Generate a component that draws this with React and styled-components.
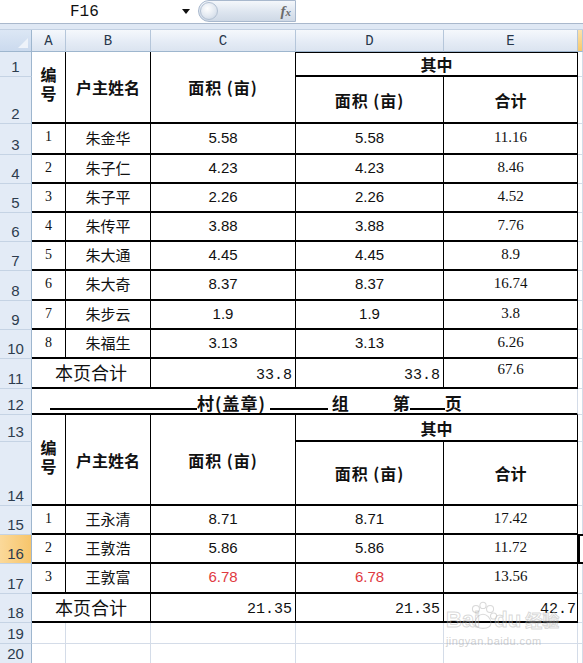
import React from 'react'
import styled, { createGlobalStyle } from 'styled-components'

const firstPage = [
	['1', '朱金华', '5.58', '11.16'],
	['2', '朱子仁', '4.23', '8.46'],
	['3', '朱子平', '2.26', '4.52'],
	['4', '朱传平', '3.88', '7.76'],
	['5', '朱大通', '4.45', '8.9'],
	['6', '朱大奇', '8.37', '16.74'],
	['7', '朱步云', '1.9', '3.8'],
	['8', '朱福生', '3.13', '6.26'],
]

const secondPage = [
	['1', '王永清', '8.71', '17.42'],
	['2', '王敦浩', '5.86', '11.72'],
	['3', '王敦富', '6.78', '13.56', true],
]

// sheet row heights, rows 1..20
const rowHeights = [25, 47, 31, 29, 29, 29, 29, 30, 29, 29, 30, 26, 27, 64, 29, 29, 30, 29, 21, 20]

const columns = ['A', 'B', 'C', 'D', 'E', '']

// grid row for a sheet row (row 1 of the grid is the column header)
const g = (row) => row + 1

function HeaderBlock({ row }) {
	let r = g(row)
	return (
		<>
			<HeadCell $area={`${r} / 2 / ${r + 2} / 3`} $size={16}><Stacked>编号</Stacked></HeadCell>
			<HeadCell $area={`${r} / 3 / ${r + 2} / 4`} $size={16}>户主姓名</HeadCell>
			<HeadCell $area={`${r} / 4 / ${r + 2} / 5`} $wide>面积 (亩)</HeadCell>
			<HeadCell $area={`${r} / 5 / ${r + 1} / 7`} $size={16} $top={row === 1}>其中</HeadCell>
			<HeadCell $area={`${r + 1} / 5 / ${r + 2} / 6`} $wide>面积 (亩)</HeadCell>
			<HeadCell $area={`${r + 1} / 6 / ${r + 2} / 7`} $size={16}>合计</HeadCell>
		</>
	)
}

function DataRow({ row, item }) {
	let r = g(row)
	let [no, name, area, sum, red] = item
	return (
		<>
			<NoCell $area={`${r} / 2 / ${r + 1} / 3`}>{no}</NoCell>
			<NameCell $area={`${r} / 3 / ${r + 1} / 4`}>{name}</NameCell>
			<AreaCell $area={`${r} / 4 / ${r + 1} / 5`} $red={red}>{area}</AreaCell>
			<AreaCell $area={`${r} / 5 / ${r + 1} / 6`} $red={red}>{area}</AreaCell>
			<SumCell $area={`${r} / 6 / ${r + 1} / 7`}>{sum}</SumCell>
		</>
	)
}

function TotalRow({ row, c, d, e, eMono }) {
	let r = g(row)
	return (
		<>
			<TotalLabel $area={`${r} / 2 / ${r + 1} / 4`}>本页合计</TotalLabel>
			<TotalValue $area={`${r} / 4 / ${r + 1} / 5`}>{c}</TotalValue>
			<TotalValue $area={`${r} / 5 / ${r + 1} / 6`}>{d}</TotalValue>
			{eMono
				? <TotalValue $area={`${r} / 6 / ${r + 1} / 7`} $pad={1}>{e}</TotalValue>
				: <SumCell $area={`${r} / 6 / ${r + 1} / 7`} $top>{e}</SumCell>}
		</>
	)
}

function App() {
	return (
		<>
			<GlobalStyle />
			<Window>
				<FormulaBar>
					<NameBox>
						<NameText>F16</NameText>
						<DropArrow />
					</NameBox>
					<FxPill>
						<PillKnob />
						<FxLabel>f<small>x</small></FxLabel>
					</FxPill>
					<FormulaInput />
				</FormulaBar>
				<Strip />

				<Grid>
					<Corner><CornerMark /></Corner>
					{columns.map((c, i) => (
						<ColHead key={'c' + i} $active={i === 5}>{c}</ColHead>
					))}
					{rowHeights.map((h, i) => (
						<RowHead key={'r' + i} $area={`${g(i + 1)} / 1 / ${g(i + 1) + 1} / 2`} $active={i + 1 === 16}>
							{i + 1}
						</RowHead>
					))}

					<HeaderBlock row={1} />
					{firstPage.map((item, i) => <DataRow key={'a' + i} row={3 + i} item={item} />)}
					<TotalRow row={11} c="33.8" d="33.8" e="67.6" />

					<TitleCell $area="13 / 2 / 14 / 7">
						<Blank $w={147} />
						<TitleWord $ls={1}>村(盖章)</TitleWord>
						<Blank $w={58} $ml={4} />
						<TitleWord $ml={4}>组</TitleWord>
						<TitleWord $ml={44}>第</TitleWord>
						<Blank $w={35} />
						<TitleWord>页</TitleWord>
					</TitleCell>

					<HeaderBlock row={13} />
					{secondPage.map((item, i) => <DataRow key={'b' + i} row={15 + i} item={item} />)}
					<TotalRow row={18} c="21.35" d="21.35" e="42.7" eMono />

					{[19, 20].map(r => [2, 3, 4, 5, 6].map(c => (
						<EmptyCell key={r + '-' + c} $area={`${g(r)} / ${c} / ${g(r) + 1} / ${c + 1}`} />
					)))}
					{rowHeights.map((h, i) => (
						i + 1 === 16
							? <SelectedCell key={'f' + i} $area={`${g(i + 1)} / 7 / ${g(i + 1) + 1} / 8`} />
							: <EmptyCell key={'f' + i} $area={`${g(i + 1)} / 7 / ${g(i + 1) + 1} / 8`} />
					))}
				</Grid>

				<Watermark>
					<MarkLine>
						<span>Bai</span>
						<Paw viewBox="0 0 34 32">
							<circle cx="9" cy="8" r="4" />
							<circle cx="17" cy="4" r="3.5" />
							<circle cx="25" cy="8" r="4" />
							<circle cx="29" cy="16" r="3.5" />
							<path d="M8 24c0-6 5-10 9-10s9 4 9 10c0 4-4 6-9 6s-9-2-9-6z" />
						</Paw>
						<span>du</span>
						<MarkCn>经验</MarkCn>
					</MarkLine>
					<MarkUrl>jingyan.baidu.com</MarkUrl>
				</Watermark>
			</Window>
		</>
	)
}

const GlobalStyle = createGlobalStyle`
	html, body {
		margin: 0;
		padding: 0;
		background: #fff;
		overflow: hidden;
	}
	body {
		font-family: "Noto Sans CJK SC", "Liberation Sans", sans-serif;
	}
`

const Window = styled.div`
	position: relative;
	width: 583px;
	height: 663px;
	overflow: hidden;
	background: #fff;
`

const FormulaBar = styled.div`
	display: flex;
	height: 23px;
	border-bottom: 1px solid #a9b8cc;
	background: #fff;
`

const NameBox = styled.div`
	width: 198px;
	display: flex;
	align-items: center;
`

const NameText = styled.span`
	margin-left: 70px;
	font-family: "Liberation Mono", monospace;
	font-size: 16px;
	color: #111;
`

const DropArrow = styled.span`
	margin-left: auto;
	margin-right: 8px;
	width: 0;
	height: 0;
	border-left: 4px solid transparent;
	border-right: 4px solid transparent;
	border-top: 5px solid #111;
`

const FxPill = styled.div`
	width: 98px;
	height: 22px;
	display: flex;
	align-items: center;
	justify-content: space-between;
	box-sizing: border-box;
	border: 1px solid #a8b8cd;
	border-radius: 11px 0 0 11px;
	background: linear-gradient(#f4f7fb, #dde5ef 55%, #cfd9e6);
`

const PillKnob = styled.span`
	width: 18px;
	height: 18px;
	margin-left: 1px;
	border-radius: 50%;
	border: 1px solid #b3c1d3;
	box-sizing: border-box;
	background: radial-gradient(circle at 40% 35%, #ffffff, #dfe6ef 60%, #c2cedd);
`

const FxLabel = styled.span`
	margin-right: 4px;
	font-family: "Liberation Serif", serif;
	font-style: italic;
	font-weight: bold;
	font-size: 15px;
	color: #6a6a6a;

	small {
		font-size: 11px;
	}
`

const FormulaInput = styled.div`
	flex: 1;
	background: #fff;
`

const Strip = styled.div`
	height: 5px;
	background: #dfe8f4;
	border-bottom: 1px solid #c2d0e2;
`

const Grid = styled.div`
	display: grid;
	grid-template-columns: 32px 34px 85px 145px 148px 134px 1fr;
	grid-template-rows: 22px ${rowHeights.map(h => h + 'px').join(' ')};
`

const Corner = styled.div`
	position: relative;
	box-sizing: border-box;
	background: linear-gradient(#dce7f5, #cbdaee);
	border-right: 1px solid #9eb6ce;
	border-bottom: 1px solid #9eb6ce;
`

const CornerMark = styled.span`
	position: absolute;
	right: 3px;
	bottom: 3px;
	width: 0;
	height: 0;
	border-left: 10px solid transparent;
	border-bottom: 10px solid #eef3fa;
`

const ColHead = styled.div`
	display: flex;
	align-items: center;
	justify-content: center;
	box-sizing: border-box;
	font-family: "Liberation Mono", monospace;
	font-size: 14px;
	color: #27374b;
	background: ${p => p.$active
		? 'linear-gradient(#fbe2ae, #f8c96b)'
		: 'linear-gradient(#f5f8fc, #e4ebf5 60%, #dbe4f0)'};
	border-right: 1px solid #b5c6da;
	border-bottom: 1px solid #9eb6ce;
`

const RowHead = styled.div`
	grid-area: ${p => p.$area};
	display: flex;
	align-items: flex-end;
	justify-content: center;
	padding-bottom: 1px;
	box-sizing: border-box;
	font-family: "Liberation Sans", sans-serif;
	font-size: 15px;
	color: #2d3c4e;
	background: ${p => p.$active ? 'linear-gradient(90deg, #fbd99a, #f7c56b)' : '#e3ebf6'};
	border-right: 1px solid #9eb6ce;
	border-bottom: 1px solid #c5d3e4;
`

const Cell = styled.div`
	grid-area: ${p => p.$area};
	display: flex;
	align-items: center;
	justify-content: center;
	box-sizing: border-box;
	min-width: 0;
	white-space: nowrap;
	border-right: 1px solid #000;
	border-bottom: 2px solid #000;
	color: #111;
`

const HeadCell = styled(Cell)`
	white-space: normal;
	text-align: center;
	font-weight: 700;
	font-size: ${p => p.$wide ? 16 : p.$size || 15}px;
	letter-spacing: ${p => p.$wide ? 1 : 0}px;
	line-height: 20px;
	box-shadow: ${p => p.$top ? 'inset 0 1px 0 #000' : 'none'};
`

const Stacked = styled.span`
	writing-mode: vertical-rl;
	letter-spacing: 3px;
	line-height: 18px;
	margin-bottom: 2px;
`

const NoCell = styled(Cell)`
	align-items: flex-start;
	padding-top: 5px;
	font-family: "Liberation Serif", serif;
	font-size: 14px;
`

const NameCell = styled(Cell)`
	font-size: 15px;
	padding-bottom: 3px;
`

const AreaCell = styled(Cell)`
	font-family: "Liberation Sans", sans-serif;
	font-size: 15px;
	padding-bottom: 3px;
	color: ${p => p.$red ? '#e03a3f' : '#111'};
`

const SumCell = styled(Cell)`
	font-family: "Liberation Serif", serif;
	font-size: 15px;
	padding-bottom: ${p => p.$top ? 8 : 3}px;
`

const TotalLabel = styled(Cell)`
	font-size: 18px;
	padding-bottom: 2px;
`

const TotalValue = styled(Cell)`
	justify-content: flex-end;
	align-items: flex-end;
	padding-right: ${p => p.$pad ?? 3}px;
	padding-bottom: 3px;
	font-family: "Liberation Mono", monospace;
	font-size: 15px;
`

const TitleCell = styled(Cell)`
	justify-content: flex-start;
	align-items: flex-end;
	padding-left: 18px;
	padding-bottom: 1px;
	border-right: 1px solid #d4dce8;
	font-weight: 700;
	font-size: 17px;
	line-height: 18px;
`

const TitleWord = styled.span`
	margin-left: ${p => p.$ml || 0}px;
	letter-spacing: ${p => p.$ls || 0}px;
`

const Blank = styled.span`
	width: ${p => p.$w}px;
	margin-left: ${p => p.$ml || 0}px;
	margin-bottom: 2px;
	border-bottom: 2px solid #000;
`

const EmptyCell = styled.div`
	grid-area: ${p => p.$area};
	box-sizing: border-box;
	border-right: 1px solid #d4dce8;
	border-bottom: 1px solid #d4dce8;
`

const SelectedCell = styled.div`
	grid-area: ${p => p.$area};
	box-sizing: border-box;
	border: 2px solid #000;
	border-right: none;
	margin-top: -1px;
`

const Watermark = styled.div`
	position: absolute;
	left: 446px;
	top: 600px;
	display: flex;
	flex-direction: column;
	color: rgba(255, 255, 255, 0.2);
	-webkit-text-stroke: 1px rgba(170, 170, 170, 0.45);
	pointer-events: none;
`

const MarkLine = styled.div`
	display: flex;
	align-items: flex-end;
	font-family: "Liberation Sans", sans-serif;
	font-weight: 700;
	font-size: 22px;
	line-height: 24px;
	height: 32px;
`

const Paw = styled.svg`
	width: 30px;
	height: 32px;
	margin: 0 -4px 0 -12px;
	fill: none;
	stroke: rgba(170, 170, 170, 0.45);
	stroke-width: 1.2;
`

const MarkCn = styled.span`
	margin-left: 4px;
	font-family: "Noto Sans CJK SC", sans-serif;
	font-size: 17px;
`

const MarkUrl = styled.span`
	margin-top: 3px;
	font-family: "Liberation Sans", sans-serif;
	font-size: 11px;
	letter-spacing: 0.4px;
	-webkit-text-stroke: 0;
	color: rgba(165, 165, 165, 0.5);
`

export default App
